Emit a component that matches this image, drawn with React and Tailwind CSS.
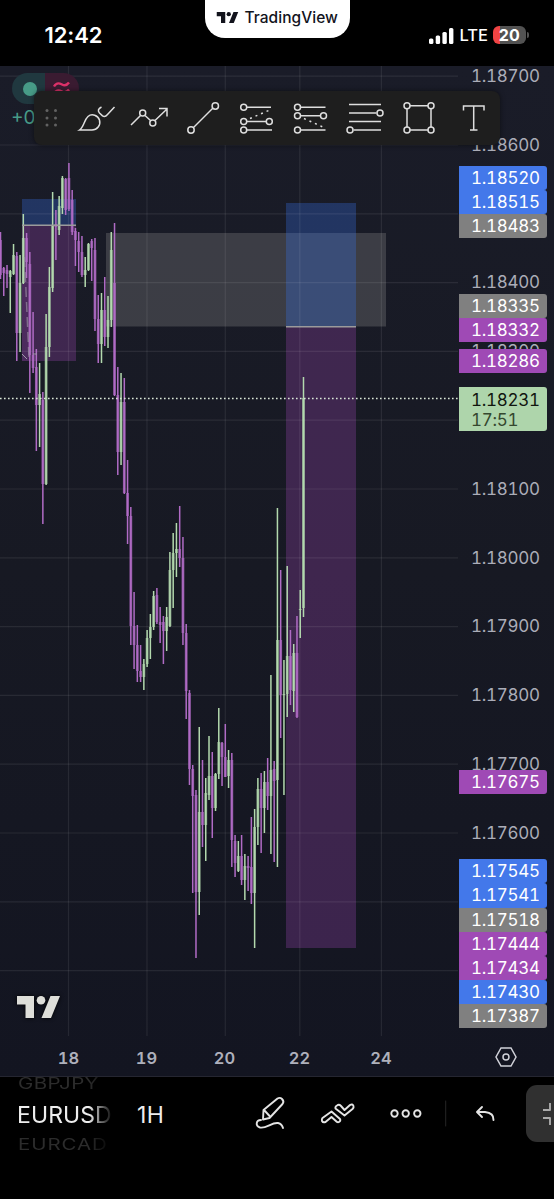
import React from 'react';

// Vertical grid lines, one per labelled session
const DAYS = [
  { label: '18', x: 68.5 },
  { label: '19', x: 147 },
  { label: '20', x: 225.3 },
  { label: '22', x: 299.8 },
  { label: '24', x: 381.4 },
];

const TICKS = [
  '1.18700', '1.18600', '', '1.18400', '1.18300', '', '1.18100',
  '1.18000', '1.17900', '1.17800', '1.17700', '1.17600', '', '',
];

const STEP = 68.8;
const CANDLE_GAP = 3.258;

// [high, body top, body bottom, low, rising]
const CANDLES = [
  [232, 240, 275, 279, 0], [267, 268, 273, 296, 0], [265, 270, 274, 288, 0], [270, 271, 277, 313, 1],
  [244, 255, 274, 275, 1], [252, 256, 333, 361, 0], [255, 283, 333, 352, 1], [214, 238, 283, 284, 1],
  [233, 238, 262, 278, 0], [252, 264, 355, 393, 0], [312, 355, 368, 373, 0], [349, 367, 405, 451, 0],
  [363, 394, 405, 447, 1], [392, 400, 484, 524, 0], [314, 347, 484, 485, 1], [267, 287, 347, 357, 1],
  [192, 225, 288, 292, 1], [210, 224, 227, 260, 0], [196, 206, 230, 235, 1], [176, 178, 208, 214, 1],
  [178, 179, 210, 215, 0], [163, 178, 209, 211, 0], [190, 200, 232, 235, 0], [228, 231, 240, 266, 0],
  [232, 241, 252, 272, 0], [236, 252, 275, 277, 0], [257, 270, 275, 287, 1], [243, 244, 270, 271, 1],
  [239, 241, 248, 281, 0], [238, 250, 319, 331, 0], [295, 319, 344, 363, 0], [293, 310, 344, 363, 1],
  [277, 310, 337, 346, 0], [296, 320, 337, 348, 1], [232, 250, 320, 327, 1], [223, 283, 395, 396, 0],
  [367, 395, 452, 475, 0], [373, 402, 452, 465, 1], [378, 402, 493, 494, 0], [460, 493, 516, 544, 0],
  [507, 516, 626, 645, 0], [592, 626, 645, 669, 0], [625, 645, 671, 682, 0], [645, 671, 677, 682, 0],
  [659, 664, 677, 690, 1], [630, 638, 664, 667, 1], [614, 627, 638, 659, 1], [591, 596, 627, 630, 1],
  [588, 595, 622, 624, 0], [607, 622, 625, 643, 0], [616, 622, 631, 664, 0], [607, 617, 631, 651, 1],
  [552, 570, 626, 627, 1], [533, 553, 570, 608, 1], [523, 549, 553, 577, 1], [506, 549, 558, 567, 0],
  [537, 558, 633, 645, 0], [624, 633, 691, 719, 0], [690, 693, 769, 785, 0], [765, 769, 796, 893, 0],
  [790, 795, 892, 958, 0], [727, 812, 892, 915, 1], [760, 812, 825, 847, 0], [778, 793, 825, 861, 1],
  [736, 776, 795, 800, 1], [752, 776, 808, 838, 0], [773, 774, 808, 811, 1], [708, 742, 774, 779, 1],
  [742, 743, 757, 786, 0], [724, 757, 777, 777, 0], [750, 760, 776, 788, 1], [753, 760, 840, 867, 0],
  [835, 841, 863, 877, 0], [841, 856, 871, 872, 1], [835, 856, 880, 885, 0], [854, 866, 880, 900, 1],
  [856, 866, 868, 891, 0], [817, 867, 893, 904, 0], [809, 827, 893, 948, 1], [778, 789, 827, 845, 1],
  [773, 789, 808, 853, 0], [771, 782, 808, 833, 1], [758, 782, 796, 810, 0], [675, 770, 796, 854, 1],
  [761, 769, 781, 862, 0], [508, 640, 780, 867, 1], [570, 640, 695, 738, 0], [660, 694, 695, 795, 1],
  [566, 656, 694, 717, 1], [630, 656, 690, 705, 0], [644, 653, 691, 712, 1], [616, 653, 717, 718, 0],
  [590, 609, 610, 638, 1], [377, 398, 608, 617, 1],
];

function Logo({ className }) {
  return (
    <svg viewBox="0 0 43 22" className={className} fill="currentColor">
      <path d="M0 0H17V22H8.5V8.5H0Z" />
      <circle cx="24" cy="4.3" r="4.3" />
      <path d="M33.5 0H43L34 22H24.5Z" />
    </svg>
  );
}

function StatusBar() {
  return (
    <header className="h-[66px] flex items-start">
      <div className="w-[204.5px] pl-[44.5px] pt-[21px] text-[22px] leading-7 font-semibold tracking-[-0.1px]">12:42</div>
      <div className="w-[145.5px] h-[38px] shrink-0 bg-white text-[#12131c] rounded-b-[20px] flex justify-center">
        <div className="flex items-center gap-[5px] h-[35px] text-[15.5px] font-medium tracking-[0.05px]">
          <Logo className="w-[23px] h-[11px] shrink-0" />
          <span>TradingView</span>
        </div>
      </div>
      <div className="w-[204px] pl-[79px] pt-[25px] flex items-center">
        <svg width="25" height="17" viewBox="0 0 25 17" fill="white">
          <rect x="0" y="11.5" width="4.4" height="5.5" rx="1.5" />
          <rect x="6.7" y="8.5" width="4.4" height="8.5" rx="1.5" />
          <rect x="13.4" y="5" width="4.4" height="12" rx="1.5" />
          <rect x="20" y="1" width="4.4" height="16" rx="1.5" />
        </svg>
        <span className="ml-[5.5px] text-[16.5px] leading-5 font-medium">LTE</span>
        <div className="ml-[5px] w-[32.5px] h-[18px] rounded-[6px] bg-linear-to-r from-[#f04444] from-20% to-[#525252] to-20% text-center text-[16px] leading-[18px] font-bold">20</div>
        <div className="ml-[1px] w-[2px] h-[6px] rounded-r bg-[#525252]" />
      </div>
    </header>
  );
}

function Candle({ data, x }) {
  const [high, top, bottom, low, rising] = data;
  const color = rising ? '#b3d9ae' : '#b06bc5';
  return (
    <g fill={color}>
      <rect x={x - 1.4} y={top} width="2.8" height={Math.max(bottom - top, 1)} opacity="0.72" />
      <rect x={x - 0.75} y={high} width="1.5" height={low - high} />
    </g>
  );
}

function PriceChart() {
  return (
    <svg width="459" height="970" viewBox="0 66 459 970" className="block">
      {/* Supply zone */}
      <rect x="106" y="233" width="280" height="93.5" fill="#808080" fillOpacity="0.34" />
      {/* Short positions */}
      <rect x="22" y="199" width="54" height="26" fill="#3773eb" fillOpacity="0.3" />
      <rect x="22" y="226" width="54" height="135" fill="#9c46b4" fillOpacity="0.3" />
      <rect x="22" y="226" width="8" height="135" fill="#9c46b4" fillOpacity="0.15" />
      <rect x="286" y="203" width="70" height="123.5" fill="#3773eb" fillOpacity="0.3" />
      <rect x="286" y="327" width="70" height="621" fill="#9c46b4" fillOpacity="0.3" />
      <g stroke="#ffffff" strokeOpacity="0.08" strokeWidth="1.2">
        {DAYS.map((d) => <line key={d.label} x1={d.x} x2={d.x} y1="66" y2="1036" />)}
        {TICKS.map((_, i) => <line key={i} x1="0" x2="458" y1={76.2 + i * STEP} y2={76.2 + i * STEP} />)}
      </g>
      {CANDLES.map((c, i) => <Candle key={i} data={c} x={0.5 + i * CANDLE_GAP} />)}
      <path d="M22 225.300H76M286 326.800H356" stroke="#9b9b9b" strokeWidth="1.4" />
      <path d="M24.500 257L29 358" stroke="#a09aa8" strokeOpacity="0.6" strokeWidth="1.5" strokeDasharray="10 5" fill="none" />
      <path d="M22 354L27 359M33 354L37 354" stroke="#a09aa8" strokeWidth="1" fill="none" />
      <line x1="0" x2="459" y1="398.5" y2="398.5" stroke="#dbe8d9" strokeWidth="1.5" strokeDasharray="1.6 2.4" />
    </svg>
  );
}

function Tag({ color, children }) {
  return <div className={`h-[24.15px] pl-3 leading-[25px] rounded-r-[3px] text-white ${color}`}>{children}</div>;
}

const BLUE = 'bg-[#4378ea]';
const GRAY = 'bg-[#808080]';
const PURPLE = 'bg-[#9f4ab5]';

function PriceScale() {
  return (
    <div className="relative w-[95px] h-[970px] overflow-hidden text-[17px] tabular-nums tracking-[-0.3px] text-[#abadb8]">
      <div className="-mt-[24px] pl-3">
        {TICKS.map((t, i) => <div key={i} className="h-[68.8px] leading-[69px]">{t}</div>)}
      </div>
      {/* Order levels cover the scale labels below them */}
      <div className="absolute top-[99.5px] left-0 w-[88px]">
        <Tag color={BLUE}>1.18520</Tag>
        <Tag color={BLUE}>1.18515</Tag>
        <Tag color={GRAY}>1.18483</Tag>
        <div className="mt-[56px]" />
        <Tag color={GRAY}>1.18335</Tag>
        <Tag color={PURPLE}>1.18332</Tag>
        <div className="mt-[7px]" />
        <Tag color={PURPLE}>1.18286</Tag>
        <div className="mt-[13.5px] h-[44px] pl-3 pt-[3px] rounded-r-[3px] bg-[#aed5ab] text-[#11160f] leading-5">
          <div>1.18231</div>
          <div className="text-[#35482f]">17:51</div>
        </div>
        <div className="mt-[339px]" />
        <Tag color={PURPLE}>1.17675</Tag>
        <div className="mt-[65.3px]" />
        <Tag color={BLUE}>1.17545</Tag>
        <Tag color={BLUE}>1.17541</Tag>
        <Tag color={GRAY}>1.17518</Tag>
        <Tag color={PURPLE}>1.17444</Tag>
        <Tag color={PURPLE}>1.17434</Tag>
        <Tag color={BLUE}>1.17430</Tag>
        <Tag color={GRAY}>1.17387</Tag>
      </div>
    </div>
  );
}

function DrawingToolbar() {
  return (
    <div className="absolute left-[34px] top-[25px] w-[466px] h-[54px] rounded-lg bg-[#1e1e1e] shadow-[0_0_5px_rgba(0,0,0,0.5)]">
      <svg width="466" height="54" viewBox="34 91 466 54" fill="none" stroke="#dedede" strokeWidth="1.5">
        <g fill="#626262" stroke="none">
          {[110.5, 118, 125].map((y) => (
            <g key={y}>
              <circle cx="47" cy={y} r="1.5" />
              <circle cx="55.5" cy={y} r="1.5" />
            </g>
          ))}
        </g>
        {/* Brush */}
        <path d="M79.500 130C84 127 84 120 88 116.500C92 113 98 115.500 99.500 120C101 125.500 97 130 92 130ZM101.500 107Q96.500 109.500 99.500 113L102.500 115.800Q105 117.500 107.500 114.500L114.500 107" />
        {/* Trend arrow */}
        <path d="M131 125L140.500 115.500M145 115.500L150.500 120.500M155 120.500L167 109M159 108.500H167V116.500" />
        <circle cx="142.700" cy="113" r="3" />
        <circle cx="152.800" cy="123" r="3" />
        {/* Trend line */}
        <path d="M193.500 127.500L213 108" />
        <circle cx="191" cy="130" r="3.200" />
        <circle cx="215.300" cy="106" r="3.200" />
        {/* Long position */}
        <path d="M247 107.300H271M247 121.500H266M247 130H272" />
        <path d="M250 118.500L271 109.500" strokeDasharray="2 4" />
        <circle cx="243.700" cy="107.300" r="3" />
        <circle cx="243.700" cy="121.500" r="3" />
        <circle cx="243.700" cy="130" r="3" />
        <circle cx="269.300" cy="121.500" r="3" />
        {/* Short position */}
        <path d="M301 107.300H325.500M301 115.700H320M301 130H325.500" />
        <path d="M304 118.500L324 127.500" strokeDasharray="2 4" />
        <circle cx="297.500" cy="107.300" r="3" />
        <circle cx="297.500" cy="115.700" r="3" />
        <circle cx="297.500" cy="130" r="3" />
        <circle cx="323.500" cy="115.700" r="3" />
        {/* Fib retracement */}
        <path d="M349 104.500H381M349 113H376.500M349 121.500H381M353.500 130H381" />
        <circle cx="380" cy="113" r="3" />
        <circle cx="350" cy="130" r="3" />
        {/* Rectangle */}
        <path d="M410 105.700H428M410 130H428M407 109V127M431 109V127" />
        <circle cx="407" cy="105.700" r="3" />
        <circle cx="431" cy="105.700" r="3" />
        <circle cx="407" cy="130" r="3" />
        <circle cx="431" cy="130" r="3" />
        {/* Text */}
        <path d="M463.500 110.500V106H484V110.500M473.700 106V130M470 130H477.500" />
      </svg>
    </div>
  );
}

function TimeScale() {
  return (
    <div className="h-[41px] pt-[3px] flex items-center">
      <div className="w-[459px] flex text-[16.5px] font-semibold tabular-nums text-[#aeb0bb]">
        <span className="w-[78px] ml-[29.5px] text-center">18</span>
        <span className="w-[78px] text-center">19</span>
        <span className="w-[78px] text-center">20</span>
        <span className="w-[72px] text-center">22</span>
        <span className="w-[91px] text-center">24</span>
      </div>
      <svg width="22" height="20" viewBox="0 0 22 20" className="ml-[36px] -mt-[2px]" fill="none" stroke="#d0d1d8" strokeWidth="1.5">
        <path d="M6 1H16L21 10L16 19H6L1 10Z" />
        <circle cx="11" cy="10" r="3" />
      </svg>
    </div>
  );
}

function BottomBar() {
  return (
    <footer className="h-[122px] flex items-start">
      <div className="ml-[17px] w-[96px] h-[80px] whitespace-nowrap mask-r-from-75% mask-r-to-100%">
        <div className="h-[14px] leading-[14px] pl-px text-[20.5px] text-[#2c2c2c] origin-left scale-y-75 tracking-[0.4px]">GBPJPY</div>
        <div className="h-[47px] leading-[48px] text-[23px] text-[#ededed] tracking-[0.1px]">EURUSD</div>
        <div className="h-[14px] leading-[14px] pl-px text-[20.5px] text-[#2c2c2c] origin-left scale-y-75 tracking-[0.9px]">EURCAD</div>
      </div>
      <div className="ml-[24px] w-[60px] pt-[14px] leading-[48px] text-[23px] text-[#ededed] tracking-[0.4px]">1H</div>
      <svg width="357" height="80" viewBox="197 1077 357 80" fill="none" stroke="#e4e4e4" strokeWidth="1.9" strokeLinejoin="round" strokeLinecap="round">
        {/* Pencil */}
        <path d="M263.500 1110L277.500 1098.500Q280 1097 282 1099Q284.500 1101.500 282.500 1104L269.500 1118L263 1119.500ZM264.500 1110.500L270 1116.500" />
        <path d="M261 1120C256 1120 255 1126 260 1127.500C266 1129 272 1122 278 1123Q282 1124 283 1128" />
        {/* Indicators */}
        <path d="M322.500 1118L331.500 1111.500L340 1119Q341 1121 339 1122Q338 1122.500 337 1122L331.500 1117L325.500 1122Q323 1123 322 1121Q321.500 1119 322.500 1118Z" />
        <path d="M337 1105.500Q339 1104 341 1106L344.500 1110L350 1105Q352.500 1103.500 353.500 1106Q354 1107.500 352.500 1109L344.500 1115.500L335.500 1108.500Q335 1106.500 337 1105.500Z" />
        <circle cx="394.500" cy="1113.500" r="3.200" />
        <circle cx="405.700" cy="1113.500" r="3.200" />
        <circle cx="417.300" cy="1113.500" r="3.200" />
        <path d="M445.700 1101V1126" stroke="#262626" strokeWidth="1" />
        {/* Undo */}
        <path d="M482 1107L477 1112L482 1117M477.500 1112H485Q494 1113 493.500 1120" />
        <rect x="526" y="1085" width="50" height="57" rx="11" fill="#303030" stroke="none" />
        <path d="M543 1110H550V1103M543 1118H550V1125" stroke="#aaaaaa" strokeLinecap="butt" />
      </svg>
    </footer>
  );
}

export default function App() {
  return (
    <div className="w-[554px] h-[1199px] overflow-hidden bg-black text-white font-['Inter',sans-serif]">
      <StatusBar />
      <main className="relative h-[1011px] bg-linear-to-b from-[#1a1c28] via-[#171923] to-[#131521] border-b border-[#252631]">
        <div className="flex">
          <PriceChart />
          <PriceScale />
        </div>
        <TimeScale />
        {/* Market status, partly behind the toolbar */}
        <div className="absolute left-[12px] top-[7px] w-[67px] h-[31px] flex rounded-full overflow-hidden">
          <div className="w-[33px] bg-[#20383f] flex items-center justify-center pl-[2px]">
            <div className="w-[14px] h-[14px] rounded-full bg-[#479b87]" />
          </div>
          <div className="flex-1 bg-[#3a1b31] text-[#dc3169]">
            <svg width="34" height="31" viewBox="0 0 34 31" fill="none" stroke="currentColor" strokeWidth="2.4">
              <path d="M9 13.500C12 8.500 15 10.500 17 11.500S21.500 13 24 9.500M9 20.500C12 15.500 15 17.500 17 18.500S21.500 20 24 16.500" />
            </svg>
          </div>
        </div>
        <div className="absolute left-[11px] top-[40px] text-[19px] leading-6 text-[#479b87]">+0</div>
        <Logo className="absolute left-[17px] top-[929.5px] w-[43px] h-[22px] text-[#deded9] drop-shadow-[0_0_2px_black]" />
        <DrawingToolbar />
      </main>
      <BottomBar />
    </div>
  );
}
